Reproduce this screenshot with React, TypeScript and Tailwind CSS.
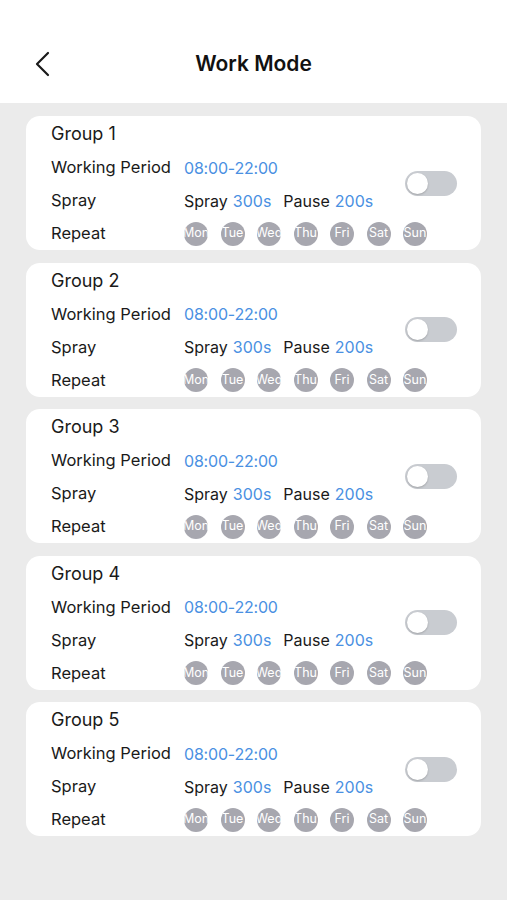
import React from "react";

const days = ["Mon", "Tue", "Wed", "Thu", "Fri", "Sat", "Sun"];

function Toggle() {
  return (
    <div className="shrink-0 w-[52px] h-[25px] rounded-full bg-[#c9ccd1] p-[2px] flex items-center">
      <div className="w-[21px] h-[21px] rounded-full bg-white shadow-[0_1px_2px_rgba(0,0,0,0.2)]" />
    </div>
  );
}

function GroupCard({ n }: { n: number }) {
  return (
    <div className="bg-white rounded-[14px] h-[134px] flex items-center pl-[25px] pr-[24px]">
      <div className="flex-1 min-w-0 h-full pt-[6px]">
        <div className="h-[24px] leading-[24px] text-[18px] text-[#1a1a1a]">Group {n}</div>
        <div className="mt-[5px]">
          <div className="h-[33px] flex items-center">
            <span className="w-[133px] shrink-0 text-[16.5px] text-[#1a1a1a]">Working Period</span>
            <span className="text-[16px] tracking-[-0.2px] text-[#4a90e2]">08:00-22:00</span>
          </div>
          <div className="h-[33px] flex items-center text-[16px]">
            <span className="w-[133px] shrink-0 text-[16.5px] text-[#1a1a1a]">Spray</span>
            <span className="text-[#1a1a1a]">Spray</span>
            <span className="ml-[5px] text-[#4a90e2]">300s</span>
            <span className="ml-[12px] text-[#1a1a1a]">Pause</span>
            <span className="ml-[5px] text-[#4a90e2]">200s</span>
          </div>
          <div className="h-[33px] flex items-center">
            <span className="w-[133px] shrink-0 text-[16.5px] text-[#1a1a1a]">Repeat</span>
            <div className="flex gap-[12.5px] shrink-0">
              {days.map((d) => (
                <div
                  key={d}
                  className="shrink-0 w-[24px] h-[24px] rounded-full bg-[#a7a7af] overflow-hidden flex items-center justify-center"
                >
                  <span className="text-[12.5px] text-white whitespace-nowrap leading-none">{d}</span>
                </div>
              ))}
            </div>
          </div>
        </div>
      </div>
      <Toggle />
    </div>
  );
}

export default function App() {
  return (
    <div className="min-h-[900px] bg-[#ebebeb] font-['Inter',sans-serif]">
      <div className="h-[103px] bg-white relative flex items-center justify-center pt-[25px]">
        <svg
          className="absolute left-[34px] top-[51px]"
          width="18"
          height="26"
          viewBox="0 0 18 26"
          fill="none"
          stroke="#1a1a1a"
          strokeWidth="2.2"
          strokeLinecap="round"
          strokeLinejoin="round"
        >
          <polyline points="14,2 3,13 14,24" />
        </svg>
        <h1 className="text-[21px] font-semibold text-[#111]">Work Mode</h1>
      </div>
      <div className="px-[26px] pt-[13px] flex flex-col gap-[12.5px]">
        {[1, 2, 3, 4, 5].map((n) => (
          <GroupCard key={n} n={n} />
        ))}
      </div>
    </div>
  );
}
